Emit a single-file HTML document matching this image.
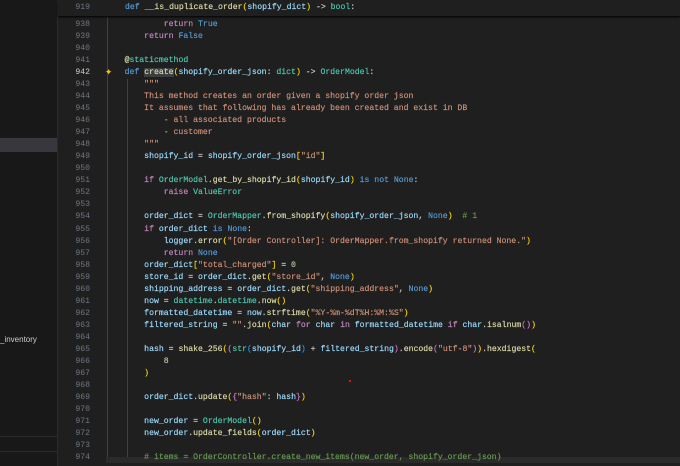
<!DOCTYPE html><html><head><style>
body{margin:0;width:680px;height:466px;background:#1f1f1f;overflow:hidden;position:relative;font-family:"Liberation Mono",monospace}
#sb{position:absolute;left:0;top:0;width:57px;height:466px;background:#181818;border-right:1px solid #2b2b2b}
.ln{position:absolute;left:58px;width:32px;text-align:right;color:#6e7681;font-size:8.17px;line-height:12px}
.c{position:absolute;left:105px;white-space:pre;color:#cccccc;font-size:8.17px;line-height:12px;-webkit-text-stroke:0.15px currentColor}
.k{color:#569cd6}.p{color:#c586c0}.f{color:#dcdcaa}.v{color:#9cdcfe}.t{color:#4ec9b0}.s{color:#ce9178}.n{color:#b5cea8}.g{color:#6a9955}.y{color:#ffd700}.m{color:#da70d6}.b{color:#179fff}
.gd{position:absolute;width:1px;background:#404040}
</style></head><body>
<div id="sb">
<div style="position:absolute;top:138px;left:0;width:57px;height:14px;background:#37373d"></div>
<div style="position:absolute;top:335px;left:0;font:8px 'Liberation Sans',sans-serif;color:#ccc">_inventory</div>
<div style="position:absolute;top:436px;left:0;width:57px;height:1px;background:#2b2b2b"></div>
<div style="position:absolute;top:451px;left:0;width:57px;height:1px;background:#2b2b2b"></div>
</div>
<div style="position:absolute;left:58px;top:0;width:622px;height:16px;background:#1f1f1f;box-shadow:0 1px 2px #000;z-index:2">
<div class="ln" style="left:0;top:2px">919</div>
<div class="c" style="left:67px;top:2px"><span class="k">def</span> <span class="f">__is_duplicate_order</span><span class="y">(</span><span class="v">shopify_dict</span><span class="y">)</span> -&gt; <span class="t">bool</span>:</div>
</div>
<div class="gd" style="left:107px;top:17px;height:440px"></div>
<div class="gd" style="left:127px;top:79px;height:378px"></div>
<div style="position:absolute;left:106px;top:457px;width:574px;height:6px;background:#2a2a2a"></div>
<div style="position:absolute;left:105px;top:64px;font-size:12px;color:#f5c518">✦</div>
<div id="code"></div>
<script>
const L=[
[938,'            <span class="p">return</span> <span class="k">True</span>'],
[939,'        <span class="p">return</span> <span class="k">False</span>'],
[940,''],
[941,'    <span class="f">@</span><span class="t">staticmethod</span>'],
[942,'    <span class="k">def</span> <span class="f" style="background:#3a3d41">create</span><span class="y">(</span><span class="v">shopify_order_json</span>: <span class="t">dict</span><span class="y">)</span> -&gt; <span class="t">OrderModel</span>:'],
[943,'        <span class="s">"""</span>'],
[944,'        <span class="s">This method creates an order given a shopify order json</span>'],
[945,'        <span class="s">It assumes that following has already been created and exist in DB</span>'],
[946,'            <span class="s">- all associated products</span>'],
[947,'            <span class="s">- customer</span>'],
[948,'        <span class="s">"""</span>'],
[949,'        <span class="v">shopify_id</span> = <span class="v">shopify_order_json</span><span class="y">[</span><span class="s">"id"</span><span class="y">]</span>'],
[950,''],
[951,'        <span class="p">if</span> <span class="t">OrderModel</span>.<span class="f">get_by_shopify_id</span><span class="y">(</span><span class="v">shopify_id</span><span class="y">)</span> <span class="k">is not</span> <span class="k">None</span>:'],
[952,'            <span class="p">raise</span> <span class="t">ValueError</span>'],
[953,''],
[954,'        <span class="v">order_dict</span> = <span class="t">OrderMapper</span>.<span class="f">from_shopify</span><span class="y">(</span><span class="v">shopify_order_json</span>, <span class="k">None</span><span class="y">)</span>  <span class="g"># 1</span>'],
[955,'        <span class="p">if</span> <span class="v">order_dict</span> <span class="k">is</span> <span class="k">None</span>:'],
[956,'            <span class="v">logger</span>.<span class="f">error</span><span class="y">(</span><span class="s">"[Order Controller]: OrderMapper.from_shopify returned None."</span><span class="y">)</span>'],
[957,'            <span class="p">return</span> <span class="k">None</span>'],
[958,'        <span class="v">order_dict</span><span class="y">[</span><span class="s">"total_charged"</span><span class="y">]</span> = <span class="n">0</span>'],
[959,'        <span class="v">store_id</span> = <span class="v">order_dict</span>.<span class="f">get</span><span class="y">(</span><span class="s">"store_id"</span>, <span class="k">None</span><span class="y">)</span>'],
[960,'        <span class="v">shipping_address</span> = <span class="v">order_dict</span>.<span class="f">get</span><span class="y">(</span><span class="s">"shipping_address"</span>, <span class="k">None</span><span class="y">)</span>'],
[961,'        <span class="v">now</span> = <span class="t">datetime</span>.<span class="t">datetime</span>.<span class="f">now</span><span class="y">()</span>'],
[962,'        <span class="v">formatted_datetime</span> = <span class="v">now</span>.<span class="f">strftime</span><span class="y">(</span><span class="s">"%Y-%m-%dT%H:%M:%S"</span><span class="y">)</span>'],
[963,'        <span class="v">filtered_string</span> = <span class="s">""</span>.<span class="f">join</span><span class="y">(</span><span class="v">char</span> <span class="p">for</span> <span class="v">char</span> <span class="p">in</span> <span class="v">formatted_datetime</span> <span class="p">if</span> <span class="v">char</span>.<span class="f">isalnum</span><span class="m">()</span><span class="y">)</span>'],
[964,''],
[965,'        <span class="v">hash</span> = <span class="f">shake_256</span><span class="y">(</span><span class="m">(</span><span class="t">str</span><span class="b">(</span><span class="v">shopify_id</span><span class="b">)</span> + <span class="v">filtered_string</span><span class="m">)</span>.<span class="f">encode</span><span class="m">(</span><span class="s">"utf-8"</span><span class="m">)</span><span class="y">)</span>.<span class="f">hexdigest</span><span class="y">(</span>'],
[966,'            <span class="n">8</span>'],
[967,'        <span class="y">)</span>'],
[968,''],
[969,'        <span class="v">order_dict</span>.<span class="f">update</span><span class="y">(</span><span class="m">{</span><span class="s">"hash"</span>: <span class="v">hash</span><span class="m">}</span><span class="y">)</span>'],
[970,''],
[971,'        <span class="v">new_order</span> = <span class="t">OrderModel</span><span class="y">()</span>'],
[972,'        <span class="v">new_order</span>.<span class="f">update_fields</span><span class="y">(</span><span class="v">order_dict</span><span class="y">)</span>'],
[973,''],
[974,'        <span class="g"># items = OrderController.create_new_items(new_order, shopify_order_json)</span>']];
let h='';L.forEach((l,i)=>{const t=19+12.03*i;h+=`<div class="ln" style="top:${t}px;${l[0]==942?'color:#ccc':''}">${l[0]}</div><div class="c" style="top:${t}px">${l[1]}</div>`});
document.getElementById('code').innerHTML=h;
</script>
<div style="position:absolute;left:349px;top:380px;width:2px;height:2px;background:#e51400"></div>
</body></html>
